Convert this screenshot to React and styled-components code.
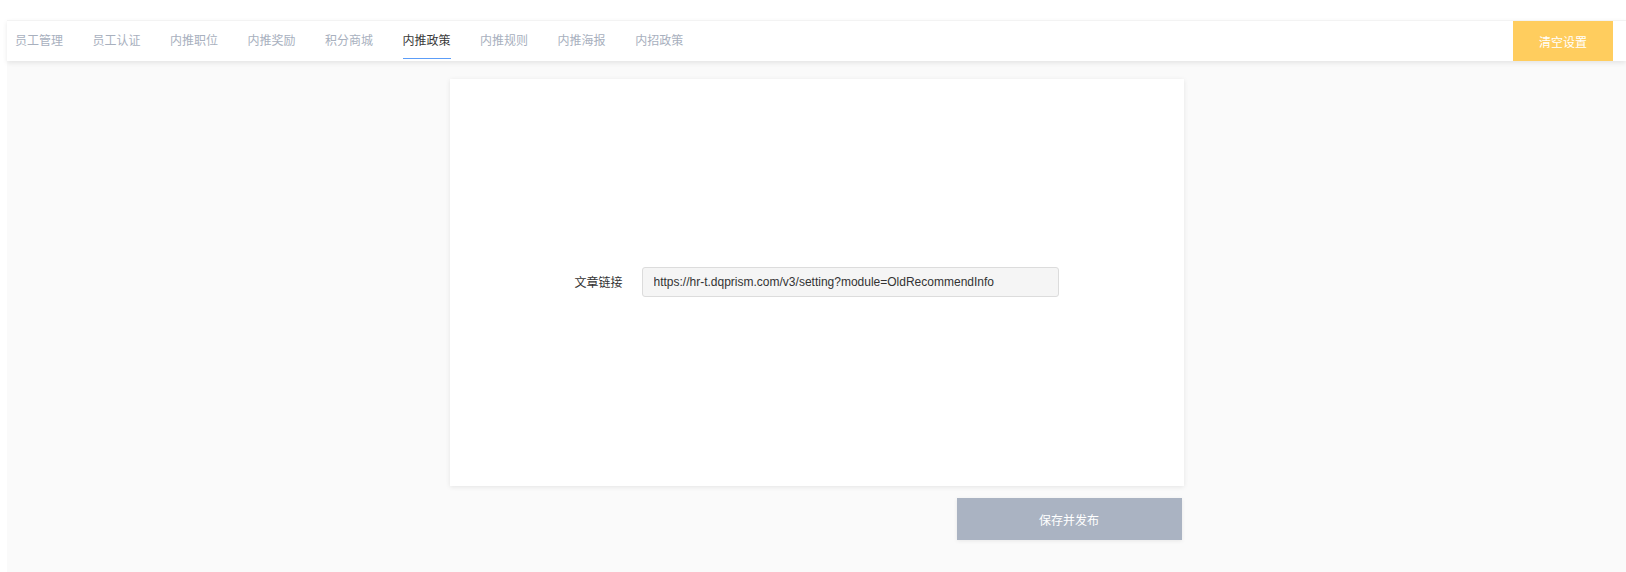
import React, {useState} from "react";
import styled, {createGlobalStyle} from "styled-components";

const Global = createGlobalStyle`
  html, body {
    margin: 0;
    padding: 0;
    background: #fff;
  }
  body {
    font-family: "Liberation Sans", Arial, "Noto Sans CJK SC", sans-serif;
  }
  * {
    box-sizing: border-box;
  }
`
const Pagina = styled.div`
  display: flex;
  min-height: 572px;
`
const Lateral = styled.div`
  width: 7px;
  background: #fff;
`
const Principal = styled.div`
  flex: 1;
  display: flex;
  flex-direction: column;
  padding-top: 20px;
  background: #fff;
`
const Barra = styled.div`
  height: 41px;
  border-top: 1px solid #f3f3f3;
  display: flex;
  align-items: flex-start;
  justify-content: space-between;
  padding: 0 13px 0 8px;
  background: #fff;
  box-shadow: 0 2px 5px rgba(0, 0, 0, 0.09);
  position: relative;
  z-index: 1;
`
const Pestanas = styled.div`
  display: flex;
  gap: 29.5px;
`
const Pestana = styled.div`
  height: 38px;
  display: flex;
  align-items: center;
  font-size: 12px;
  cursor: pointer;
  color: ${props => props.$activa ? "#3a3a3a" : "#a8b0be"};
  border-bottom: 1px solid ${props => props.$activa ? "#5c9df8" : "transparent"};
`
const BotonLimpiar = styled.button`
  width: 100px;
  height: 40px;
  border: none;
  background: #ffcd5e;
  color: #fff;
  font-family: inherit;
  font-size: 12px;
  cursor: pointer;
`
const Contenido = styled.div`
  flex: 1;
  background: #fafafa;
  padding: 18px 0 30px;
`
const Tarjeta = styled.div`
  width: 734px;
  height: 407px;
  margin: 0 auto;
  background: #fff;
  box-shadow: 0 1px 5px rgba(0, 0, 0, 0.09);
  display: flex;
  align-items: center;
  justify-content: center;
`
const Fila = styled.div`
  display: flex;
  align-items: center;
  margin-top: -2px;

  label {
    font-size: 12px;
    color: #333;
    margin-right: 19px;
  }
`
const Campo = styled.input`
  width: 417px;
  height: 30px;
  border: 1px solid #dcdcdc;
  border-radius: 3px;
  background: #f5f5f5;
  padding: 0 11px;
  font-family: inherit;
  font-size: 12px;
  color: #333;
  outline: none;
`
const Pie = styled.div`
  width: 734px;
  margin: 12px auto 0;
  display: flex;
  justify-content: flex-end;
  padding-right: 2px;
`
const BotonGuardar = styled.button`
  width: 225px;
  height: 42px;
  border: none;
  background: #aab3c2;
  color: #fff;
  font-family: inherit;
  font-size: 12px;
  box-shadow: 0 1px 4px rgba(0, 0, 0, 0.08);
  cursor: pointer;
`

const pestanas = ["员工管理", "员工认证", "内推职位", "内推奖励", "积分商城", "内推政策", "内推规则", "内推海报", "内招政策"]

const App = () => {
  const [activa, cambiarActiva] = useState("内推政策")
  const [enlace, cambiarEnlace] = useState("https://hr-t.dqprism.com/v3/setting?module=OldRecommendInfo")

  return (
    <Pagina>
      <Global />
      <Lateral />
      <Principal>
        <Barra>
          <Pestanas>
            {pestanas.map((p) => (
              <Pestana key={p} $activa={p === activa} onClick={() => cambiarActiva(p)}>{p}</Pestana>
            ))}
          </Pestanas>
          <BotonLimpiar type="button">清空设置</BotonLimpiar>
        </Barra>

        <Contenido>
          <Tarjeta>
            <Fila>
              <label>文章链接</label>
              <Campo
                type="text"
                value={enlace}
                onChange={(e) => cambiarEnlace(e.target.value)}
              />
            </Fila>
          </Tarjeta>
          <Pie>
            <BotonGuardar type="button">保存并发布</BotonGuardar>
          </Pie>
        </Contenido>
      </Principal>
    </Pagina>
  );
}

export default App;
